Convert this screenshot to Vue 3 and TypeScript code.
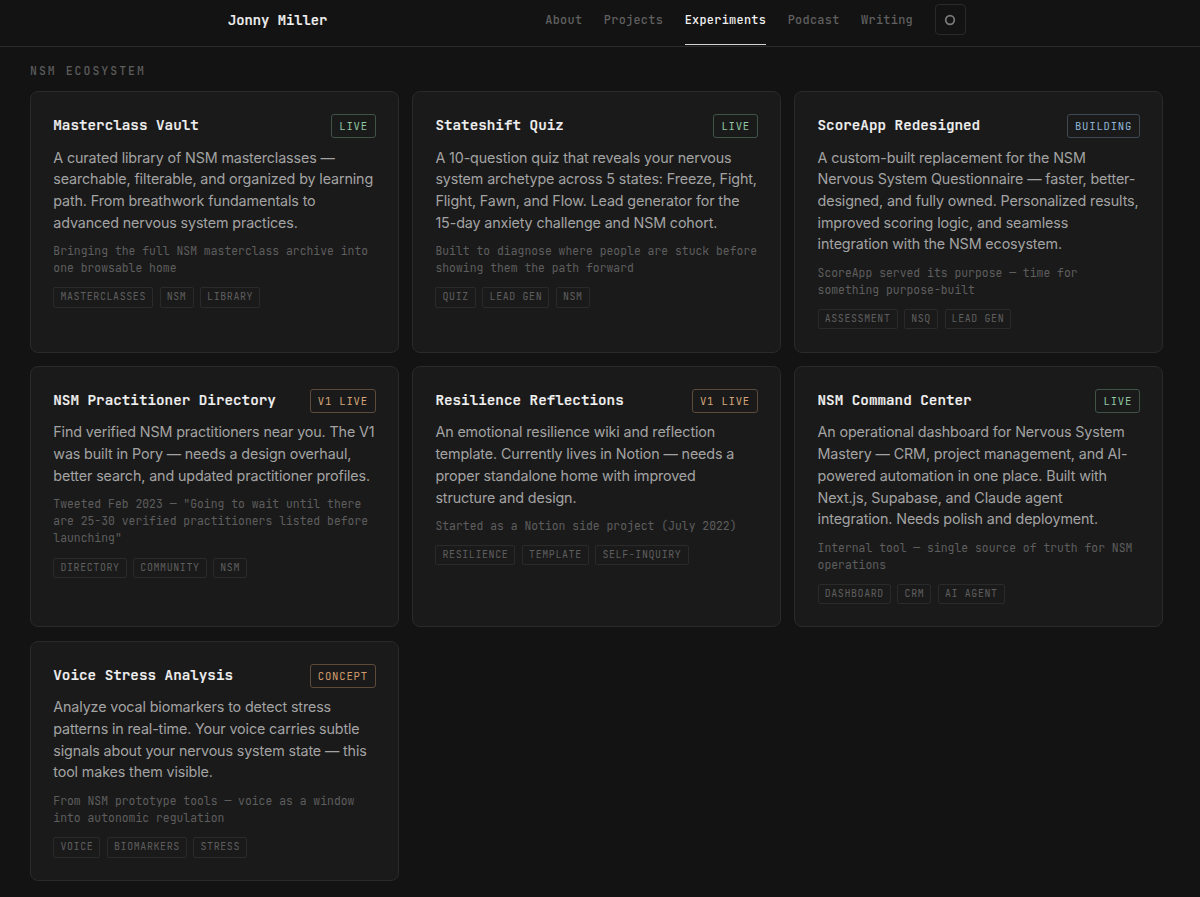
<script setup lang="ts">
type Tone = 'green' | 'blue' | 'amber' | 'orange'

interface Experiment {
  title: string
  status: string
  tone: Tone
  description: string
  note: string
  tags: string[]
}

const links: string[] = ['About', 'Projects', 'Experiments', 'Podcast', 'Writing']
const activeLink = 'Experiments'

const experiments: Experiment[] = [
  {
    title: 'Masterclass Vault',
    status: 'Live',
    tone: 'green',
    description:
      'A curated library of NSM masterclasses — searchable, filterable, and organized by learning path. From breathwork fundamentals to advanced nervous system practices.',
    note: 'Bringing the full NSM masterclass archive into one browsable home',
    tags: ['Masterclasses', 'NSM', 'Library'],
  },
  {
    title: 'Stateshift Quiz',
    status: 'Live',
    tone: 'green',
    description:
      'A 10-question quiz that reveals your nervous system archetype across 5 states: Freeze, Fight, Flight, Fawn, and Flow. Lead generator for the 15-day anxiety challenge and NSM cohort.',
    note: 'Built to diagnose where people are stuck before showing them the path forward',
    tags: ['Quiz', 'Lead Gen', 'NSM'],
  },
  {
    title: 'ScoreApp Redesigned',
    status: 'Building',
    tone: 'blue',
    description:
      'A custom-built replacement for the NSM Nervous System Questionnaire — faster, better-designed, and fully owned. Personalized results, improved scoring logic, and seamless integration with the NSM ecosystem.',
    note: 'ScoreApp served its purpose — time for something purpose-built',
    tags: ['Assessment', 'NSQ', 'Lead Gen'],
  },
  {
    title: 'NSM Practitioner Directory',
    status: 'V1 Live',
    tone: 'amber',
    description:
      'Find verified NSM practitioners near you. The V1 was built in Pory — needs a design overhaul, better search, and updated practitioner profiles.',
    note: 'Tweeted Feb 2023 — "Going to wait until there are 25-30 verified practitioners listed before launching"',
    tags: ['Directory', 'Community', 'NSM'],
  },
  {
    title: 'Resilience Reflections',
    status: 'V1 Live',
    tone: 'amber',
    description:
      'An emotional resilience wiki and reflection template. Currently lives in Notion — needs a proper standalone home with improved structure and design.',
    note: 'Started as a Notion side project (July 2022)',
    tags: ['Resilience', 'Template', 'Self-Inquiry'],
  },
  {
    title: 'NSM Command Center',
    status: 'Live',
    tone: 'green',
    description:
      'An operational dashboard for Nervous System Mastery — CRM, project management, and AI-powered automation in one place. Built with Next.js, Supabase, and Claude agent integration. Needs polish and deployment.',
    note: 'Internal tool — single source of truth for NSM operations',
    tags: ['Dashboard', 'CRM', 'AI Agent'],
  },
  {
    title: 'Voice Stress Analysis',
    status: 'Concept',
    tone: 'orange',
    description:
      'Analyze vocal biomarkers to detect stress patterns in real-time. Your voice carries subtle signals about your nervous system state — this tool makes them visible.',
    note: 'From NSM prototype tools — voice as a window into autonomic regulation',
    tags: ['Voice', 'Biomarkers', 'Stress'],
  },
]
</script>

<template>
  <div class="page">
    <header class="topbar">
      <div class="topbar-inner">
        <a class="brand">Jonny Miller</a>
        <nav class="nav">
          <a
            v-for="link in links"
            :key="link"
            class="nav-link"
            :class="{ active: link === activeLink }"
            >{{ link }}</a
          >
          <button class="toggle" type="button" aria-label="Toggle theme">
            <svg width="12" height="12" viewBox="0 0 12 12" fill="none">
              <circle cx="6" cy="6" r="4.3" stroke="currentColor" stroke-width="1.7" />
            </svg>
          </button>
        </nav>
      </div>
    </header>

    <main class="content">
      <h2 class="section-label">NSM Ecosystem</h2>
      <div class="grid">
        <article v-for="item in experiments" :key="item.title" class="card">
          <div class="card-head">
            <h3 class="title">{{ item.title }}</h3>
            <span class="badge" :class="item.tone">{{ item.status }}</span>
          </div>
          <p class="description">{{ item.description }}</p>
          <p class="note">{{ item.note }}</p>
          <div class="tags">
            <span v-for="tag in item.tags" :key="tag" class="tag">{{ tag }}</span>
          </div>
        </article>
      </div>
    </main>
  </div>
</template>

<style>
html,
body {
  background: #131313;
  overflow: hidden;
}
</style>

<style scoped>
.page {
  height: 897px;
  overflow: hidden;
  background: #131313;
  font-family: 'JetBrains Mono', 'DejaVu Sans Mono', monospace;
  color: #f2f2f2;
}

.page * {
  box-sizing: border-box;
}

.topbar {
  height: 47px;
  border-bottom: 1px solid #2a2a2a;
}

.topbar-inner {
  display: flex;
  justify-content: space-between;
  width: 737.5px;
  margin-left: 228px;
}

.brand {
  font-size: 13.8px;
  font-weight: 500;
  line-height: 40px;
  -webkit-text-stroke: 0.2px currentColor;
}

.nav {
  display: flex;
  align-items: flex-start;
  gap: 21.5px;
}

.nav-link {
  height: 45px;
  font-size: 11.9px;
  font-weight: 500;
  letter-spacing: 0.28px;
  line-height: 40.4px;
  color: #606060;
  border-bottom: 1.6px solid transparent;
}

.nav-link.active {
  color: #f2f2f2;
  border-bottom-color: #d6d2d6;
}

.toggle {
  display: flex;
  align-items: center;
  justify-content: center;
  width: 31px;
  height: 31px;
  margin-top: 4px;
  padding: 0;
  background: transparent;
  border: 1px solid #2a2a2a;
  border-radius: 4px;
  color: #7a7a7a;
}

.content {
  padding: 16px 37px 0 30px;
}

.section-label {
  margin: 0 0 12.1px;
  font-size: 11.5px;
  font-weight: 500;
  line-height: 16px;
  letter-spacing: 2.02px;
  text-transform: uppercase;
  color: #5c5c5c;
}

.grid {
  display: grid;
  grid-template-columns: repeat(3, 1fr);
  gap: 13.4px;
}

.card {
  padding: 21.8px 21.8px 22.2px 22.3px;
  background: #1a1a1a;
  border: 1px solid #2a2a2a;
  border-radius: 8px;
}

.card-head {
  display: flex;
  align-items: center;
  justify-content: space-between;
  height: 24px;
  margin-bottom: 8.7px;
}

.title {
  margin: 0;
  font-size: 14.27px;
  font-weight: 500;
  line-height: 20px;
  padding-bottom: 2px;
  -webkit-text-stroke: 0.2px currentColor;
}

.badge {
  height: 24px;
  padding: 0 7.1px;
  border: 1px solid;
  border-radius: 3px;
  font-size: 10.6px;
  line-height: 22.4px;
  letter-spacing: 0.79px;
  text-transform: uppercase;
  white-space: nowrap;
}

.badge.green {
  color: #8fc7a2;
  border-color: #3f5447;
}

.badge.blue {
  color: #8db4d6;
  border-color: #3d4a56;
}

.badge.amber {
  color: #d6a67a;
  border-color: #5c4a3b;
}

.badge.orange {
  color: #d09c6c;
  border-color: #5c4a3b;
}

.description {
  margin: 0 0 8.6px;
  font-family: Inter, sans-serif;
  font-size: 14.3px;
  letter-spacing: -0.12px;
  line-height: 21.68px;
  color: #a3a3a3;
}

.note {
  margin: 0 0 11.2px;
  font-size: 11.41px;
  line-height: 17.15px;
  color: #5e5e5e;
}

.tags {
  display: flex;
  gap: 6.5px;
}

.tag {
  height: 20.3px;
  padding: 0 6.1px;
  border: 1px solid #2a2a2a;
  border-radius: 2px;
  font-size: 9.93px;
  line-height: 18.6px;
  letter-spacing: 0.63px;
  text-transform: uppercase;
  color: #5e5e5e;
}
</style>
